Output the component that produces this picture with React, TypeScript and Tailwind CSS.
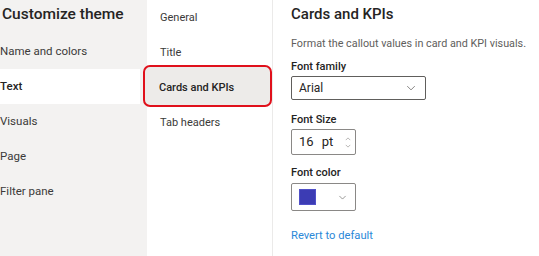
import React from 'react';

const sections = ['Name and colors', 'Text', 'Visuals', 'Page', 'Filter pane'];
const subSections = ['General', 'Title', 'Cards and KPIs', 'Tab headers'];

const Chevron: React.FC<{ className?: string }> = ({ className }) => (
  <svg viewBox="0 0 12 8" className={className} fill="none" stroke="currentColor" strokeWidth="1">
    <path d="M1 1.5l5 5 5-5" />
  </svg>
);

const App: React.FC = () => {
  return (
    <div
      className="w-[539px] h-[256px] flex bg-white text-[#252423] overflow-hidden"
      style={{ fontFamily: 'Roboto, "Open Sans", sans-serif' }}
    >
      {/* Sections */}
      <div className="w-[147px] shrink-0 bg-[#f3f2f1] flex flex-col">
        <h1 className="pl-[2px] pt-[3px] text-[15.5px] font-medium leading-[22px] whitespace-nowrap">Customize theme</h1>
        <div className="mt-[9px] flex flex-col">
          {sections.map((s) => (
            <div
              key={s}
              className={
                s === 'Text'
                  ? 'h-[35px] w-[140px] flex items-center bg-white text-[11.5px] font-medium'
                  : 'h-[35px] flex items-center text-[11.5px] text-[#3b3a39]'
              }
            >
              {s}
            </div>
          ))}
        </div>
      </div>

      {/* Sub sections */}
      <div className="w-[126px] shrink-0 border-r border-[#ebeae9] flex flex-col pt-[1px]">
        {subSections.map((s) => (
          <div key={s} className="h-[35px] flex items-center">
            {s === 'Cards and KPIs' ? (
              <div className="-ml-[4px] -mt-[6px] w-[132px] h-[42px] rounded-[7px] border-[2.5px] border-[#e0101b] bg-[#edebe9] flex items-center pl-[14px] pt-[5px] text-[11px] font-medium">
                {s}
              </div>
            ) : (
              <span className="pl-[13px] text-[11px] text-[#3b3a39]">{s}</span>
            )}
          </div>
        ))}
      </div>

      {/* Settings */}
      <div className="flex-1 pl-[18px] pt-[4px] flex flex-col">
        <h2 className="text-[15px] font-medium leading-[20px]">Cards and KPIs</h2>
        <p className="mt-[12px] text-[10.8px] text-[#605e5c] leading-[16px] whitespace-nowrap">
          Format the callout values in card and KPI visuals.
        </p>

        <label className="mt-[7px] text-[11px] font-medium leading-[16px]">Font family</label>
        <div className="mt-[1px] w-[135px] h-[24px] border border-[#605e5c] rounded-[2px] flex items-center justify-between pl-[7px] pr-[9px]">
          <span className="text-[12px]">Arial</span>
          <Chevron className="w-[10px] h-[6px] text-[#605e5c]" />
        </div>

        <label className="mt-[12px] text-[11px] font-medium leading-[16px]">Font Size</label>
        <div className="mt-[1px] w-[65px] h-[26px] border border-[#8a8886] rounded-[2px] flex items-center pl-[7px] pr-[4px]">
          <span className="text-[13px]">16</span>
          <span className="ml-[8px] text-[13px]">pt</span>
          <div className="ml-auto flex flex-col gap-[3px] text-[#a19f9d]">
            <svg viewBox="0 0 8 5" className="w-[6px] h-[4px]" fill="none" stroke="currentColor" strokeWidth="1">
              <path d="M1 4l3-3 3 3" />
            </svg>
            <svg viewBox="0 0 8 5" className="w-[6px] h-[4px]" fill="none" stroke="currentColor" strokeWidth="1">
              <path d="M1 1l3 3 3-3" />
            </svg>
          </div>
        </div>

        <label className="mt-[10px] text-[11px] font-medium leading-[16px]">Font color</label>
        <div className="mt-[2px] w-[65px] h-[28px] border border-[#8a8886] rounded-[2px] flex items-center pl-[7px] pr-[8px]">
          <div className="w-[17px] h-[16px] bg-[#3c3cb4] border border-[#5050c8]" />
          <Chevron className="ml-auto w-[9px] h-[5px] text-[#605e5c]" />
        </div>

        <a className="mt-[17px] text-[11.2px] text-[#2b88d8] leading-[16px]">Revert to default</a>
      </div>
    </div>
  );
};

export default App;
